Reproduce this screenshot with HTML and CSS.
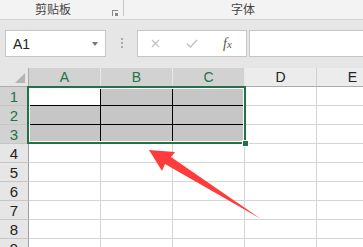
FILE: index.html
```html
<!DOCTYPE html>
<html lang="zh">
<head>
  <meta charset="UTF-8">
  <title>Sheet</title>
  <link rel="stylesheet" href="styles.css">
</head>
<body>
  <div class="ribbon">
    <div class="group group-clip">
      <span class="group-label">剪贴板</span>
      <span class="launcher"></span>
    </div>
    <div class="group group-font">
      <span class="group-label">字体</span>
    </div>
  </div>

  <div class="formula-bar">
    <div class="name-box">
      <span>A1</span>
      <span class="caret"></span>
    </div>
    <div class="grip"></div>
    <div class="func-box">
      <span class="fb-icon">
        <svg width="9" height="9" viewBox="0 0 9 9"><path d="M1 1L8 8M8 1L1 8" stroke="#c4c4c4" stroke-width="1.4" fill="none"/></svg>
      </span>
      <span class="fb-icon">
        <svg width="12" height="9" viewBox="0 0 12 9"><path d="M1 4.5L4.5 8L11 1" stroke="#c4c4c4" stroke-width="1.6" fill="none"/></svg>
      </span>
      <span class="fb-icon fx"><i>f</i><i class="x">x</i></span>
    </div>
    <div class="formula-input"></div>
  </div>

  <div class="sheet">
    <div class="grid">
      <div class="corner"><span class="tri"></span></div>
      <div class="ch sel-h">A</div>
      <div class="ch sel-h">B</div>
      <div class="ch sel-h">C</div>
      <div class="ch">D</div>
      <div class="ch">E</div>

      <div class="rh sel-h">1</div>
      <div class="c sel active"></div>
      <div class="c sel"></div>
      <div class="c sel"></div>
      <div class="c"></div>
      <div class="c"></div>

      <div class="rh sel-h">2</div>
      <div class="c sel"></div>
      <div class="c sel"></div>
      <div class="c sel"></div>
      <div class="c"></div>
      <div class="c"></div>

      <div class="rh sel-h">3</div>
      <div class="c sel"></div>
      <div class="c sel"></div>
      <div class="c sel"></div>
      <div class="c"></div>
      <div class="c"></div>

      <div class="rh">4</div>
      <div class="c"></div><div class="c"></div><div class="c"></div><div class="c"></div><div class="c"></div>
      <div class="rh">5</div>
      <div class="c"></div><div class="c"></div><div class="c"></div><div class="c"></div><div class="c"></div>
      <div class="rh">6</div>
      <div class="c"></div><div class="c"></div><div class="c"></div><div class="c"></div><div class="c"></div>
      <div class="rh">7</div>
      <div class="c"></div><div class="c"></div><div class="c"></div><div class="c"></div><div class="c"></div>
      <div class="rh">8</div>
      <div class="c"></div><div class="c"></div><div class="c"></div><div class="c"></div><div class="c"></div>
      <div class="rh">9</div>
      <div class="c"></div><div class="c"></div><div class="c"></div><div class="c"></div><div class="c"></div>
    </div>

    <!-- selection frame A1:C3 -->
    <div class="selection"><span class="handle"></span></div>

    <!-- red pointer arrow -->
    <svg class="arrow" width="363" height="179" viewBox="0 68 363 179">
      <polygon points="149,150 175,152 171,157 261,219 165,164 162,171" fill="#ff3b3b"/>
    </svg>
  </div>
</body>
</html>
```

FILE: styles.css
```css
body {
  margin: 0;
  width: 363px;
  height: 247px;
  overflow: hidden;
  font-family: "Liberation Sans", Arial, "Noto Sans CJK SC", sans-serif;
  background: #ffffff;
  color: #222;
}
/* Ribbon strip */
.ribbon {
  display: flex;
  height: 19px;
  background: #f3f3f3;
  border-bottom: 1px solid #d4d4d4;
}
.group {
  display: flex;
  align-items: flex-start;
  height: 16px;
}
.group-label {
  font-family: "Noto Sans CJK SC", sans-serif;
  font-size: 12px;
  line-height: 14px;
  padding-top: 2px;
  color: #444;
}
.group-clip {
  width: 123px;
  border-right: 1px solid #c6c6c6;
}
.group-clip .group-label {
  margin-left: 35px;
}
.launcher {
  width: 5px;
  height: 5px;
  margin: 10px 5px 0 auto;
  border-left: 1px solid #8a8a8a;
  border-top: 1px solid #8a8a8a;
  position: relative;
}
.launcher::after {
  content: "";
  position: absolute;
  right: 0;
  bottom: 0;
  width: 3px;
  height: 3px;
  background: #8a8a8a;
}
.group-font .group-label {
  margin-left: 107px;
}
/* Formula bar */
.formula-bar {
  display: flex;
  align-items: flex-start;
  height: 38px;
  padding-top: 10px;
  background: #e6e6e6;
}
.name-box {
  display: flex;
  align-items: center;
  width: 99px;
  height: 25px;
  margin-left: 5px;
  background: #fff;
  border: 1px solid #c6c6c6;
  font-size: 14px;
}
.name-box span:first-child {
  margin-left: 7px;
}
.caret {
  margin-left: auto;
  margin-right: 7px;
  border-left: 3.5px solid transparent;
  border-right: 3.5px solid transparent;
  border-top: 4px solid #777;
}
.grip {
  width: 2px;
  height: 10px;
  margin: 8px 14px 0 15px;
  background: repeating-linear-gradient(#aaa 0 2px, transparent 2px 4px);
}
.func-box {
  display: flex;
  align-items: center;
  width: 108px;
  height: 25px;
  background: #fff;
  border: 1px solid #c6c6c6;
}
.fb-icon {
  display: flex;
  align-items: center;
}
.fb-icon:first-child {
  margin-left: 13px;
}
.fb-icon:nth-child(2) {
  margin-left: 26px;
}
.fx {
  margin-left: 25px;
  font-family: "Liberation Serif", serif;
  font-size: 14px;
  color: #555;
}
.fx .x {
  font-size: 11px;
}
.formula-input {
  flex: 1;
  height: 25px;
  margin-left: 2px;
  background: #fff;
  border: 1px solid #c6c6c6;
  border-right: none;
}
/* Sheet grid */
.sheet {
  position: relative;
}
.grid {
  display: grid;
  grid-template-columns: 29px 72px 72px 72px 72px 72px;
  grid-template-rows: 19px repeat(9, 19px);
}
.grid > div {
  box-sizing: border-box;
  border-right: 1px solid #d4d4d4;
  border-bottom: 1px solid #d4d4d4;
}
.corner {
  position: relative;
  background: #e6e6e6;
  border-right-color: #ababab !important;
  border-bottom-color: #ababab !important;
}
.tri {
  position: absolute;
  right: 3px;
  bottom: 3px;
  border-left: 10px solid transparent;
  border-bottom: 10px solid #b4b4b4;
}
.ch {
  background: #ececec;
  text-align: center;
  font-size: 14px;
  line-height: 18px;
  border-right-color: #d0d0d0 !important;
  border-bottom-color: #ababab !important;
}
.rh {
  background: #e6e6e6;
  text-align: center;
  font-size: 15px;
  line-height: 19px;
  border-right-color: #9e9e9e !important;
  border-bottom-color: #c6c6c6 !important;
}
.sel-h {
  background: #d2d2d2;
  color: #217346;
}
.ch.sel-h {
  border-right-color: #e8e8e8 !important;
}
.c.sel {
  background: #c6c6c6;
  border-right-color: #000;
  border-bottom-color: #000;
}
.c.active {
  background: #fff;
}
.selection {
  position: absolute;
  left: 27px;
  top: 18px;
  width: 215px;
  height: 54px;
  border: 2px solid #217346;
  box-shadow: inset 0 0 0 1px #fff;
}
.handle {
  position: absolute;
  right: -5px;
  bottom: -5px;
  width: 5px;
  height: 5px;
  background: #217346;
  border: 1px solid #fff;
}
.arrow {
  position: absolute;
  left: 0;
  top: 0;
}
```
